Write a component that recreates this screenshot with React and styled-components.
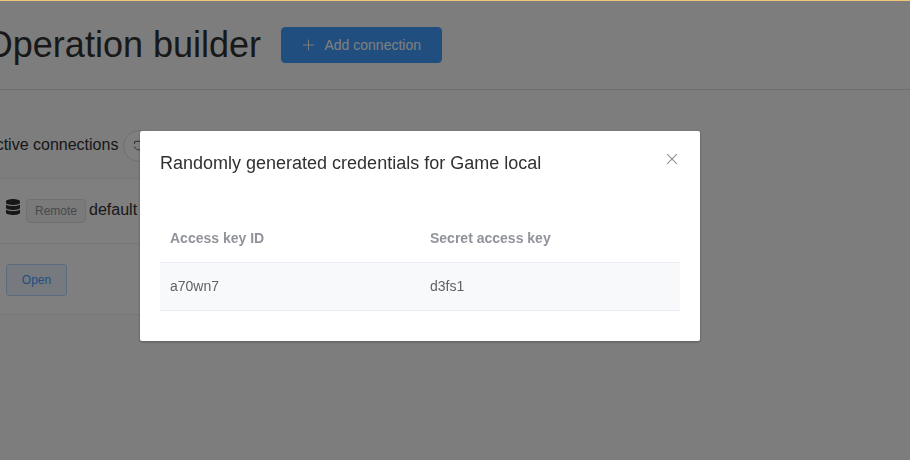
import React from 'react';
import styled, { createGlobalStyle } from 'styled-components';

const GlobalStyle = createGlobalStyle`
  *, *::before, *::after { box-sizing: border-box; }
  body {
    margin: 0;
    overflow: hidden;
    font-family: "Liberation Sans", Arial, sans-serif;
    background: #fafafa;
    color: #303133;
  }
`;

const Page = styled.div`
  height: 460px;
  overflow: hidden;
  background: #fafafa;
`;

const ProgressBar = styled.div`
  position: fixed;
  inset: 0 0 auto 0;
  height: 1px;
  background: #f0c674;
  z-index: 10;
`;

const Header = styled.header`
  display: flex;
  align-items: center;
  gap: 20px;
  height: 90px;
  margin-left: -20px;
  border-bottom: 1px solid #dcdcdc;
`;

const Title = styled.h1`
  margin: 0;
  width: 281px;
  text-align: right;
  white-space: nowrap;
  font-size: 36px;
  line-height: 40px;
  font-weight: 400;
  color: #303133;
`;

const PrimaryButton = styled.button`
  display: flex;
  align-items: center;
  gap: 9.5px;
  width: 161px;
  height: 36px;
  padding: 0 20px;
  border: 1px solid #409eff;
  border-radius: 4px;
  background: #409eff;
  color: #fff;
  font: 14px "Liberation Sans", Arial, sans-serif;
  white-space: nowrap;
`;

const SectionHeading = styled.div`
  display: flex;
  align-items: center;
  gap: 5px;
  height: 32px;
  margin: 40px 0 16px -16px;
  font-size: 16px;
  white-space: nowrap;
`;

const SectionLabel = styled.span`
  width: 134.4px;
  margin-right: -0.4px;
  display: flex;
  justify-content: flex-end;
  line-height: 30px;
  padding-bottom: 2px;
`;

const RoundButton = styled.button`
  display: flex;
  align-items: center;
  justify-content: center;
  width: 32px;
  height: 32px;
  padding: 0;
  border: 1px solid #dcdfe6;
  border-radius: 50%;
  background: #fff;
  color: #606266;
`;

const ConnectionList = styled.section`
  width: 400px;
  background: #fff;
  border-top: 1px solid #ebeef5;
`;

const ConnectionRow = styled.div`
  display: flex;
  align-items: center;
  height: ${(p) => p.$height}px;
  padding: ${(p) => p.$offset || 0}px 0 0 6px;
  border-bottom: 1px solid #ebeef5;
  font-size: 16px;
`;

const Tag = styled.span`
  height: 24px;
  margin: 0 3px 0 6px;
  padding: 0 8px;
  border: 1px solid #e0e1e4;
  border-radius: 4px;
  background: #f4f4f5;
  color: #909399;
  font-size: 12px;
  line-height: 23px;
`;

const Name = styled.span`
  line-height: 18px;
  margin-top: -2px;
`;

const OpenButton = styled.button`
  height: 32px;
  width: 61px;
  padding: 0;
  border: 1px solid #b3d8ff;
  border-radius: 3px;
  background: #ecf5ff;
  color: #409eff;
  font: 12px "Liberation Sans", Arial, sans-serif;
`;

const Overlay = styled.div`
  position: fixed;
  inset: 0;
  padding: 131px 0 0 140px;
  background: rgba(0, 0, 0, 0.5);
`;

const Dialog = styled.div`
  width: 560px;
  height: 210px;
  border-radius: 2px;
  background: #fff;
  box-shadow: 0 1px 3px rgba(0, 0, 0, 0.3);
`;

const DialogHeader = styled.div`
  display: flex;
  justify-content: space-between;
  padding: 20px 20px 10px;
  font-size: 18px;
  line-height: 24px;
  color: #303133;
`;

const CloseButton = styled.button`
  width: 16px;
  height: 16px;
  padding: 0;
  border: 0;
  background: none;
  color: #909399;
  display: block;
`;

const DialogBody = styled.div`
  padding: 30px 20px;
`;

const Table = styled.div`
  font-size: 14px;
  line-height: 23px;
  color: #606266;
`;

const TableRow = styled.div`
  display: grid;
  grid-template-columns: 260px 260px;
  height: 48px;
  align-items: center;
  padding-bottom: 1px;
  border-bottom: 1px solid #ebeef5;
  background: ${(p) => (p.$striped ? '#f8f9fb' : '#fff')};
  color: ${(p) => (p.$head ? '#909399' : '#606266')};
  font-weight: ${(p) => (p.$head ? 700 : 400)};
`;

const Cell = styled.div`
  padding: 0 10px;
`;

const PlusIcon = () => (
  <svg width="14" height="14" viewBox="0 0 14 14" stroke="currentColor" strokeWidth="1">
    <path d="M7 1.2v11.6M1.2 7h11.6" />
  </svg>
);

const CloseIcon = () => (
  <svg width="16" height="16" viewBox="0 0 16 16" stroke="currentColor" strokeWidth="1.15">
    <path d="M3.2 3.2l9.6 9.6M12.8 3.2l-9.6 9.6" />
  </svg>
);

const RefreshIcon = () => (
  <svg width="12" height="12" viewBox="0 0 12 12" fill="none" stroke="currentColor" strokeWidth="1">
    <path d="M4.5 1.5H1.5V4M2 2C4 .6 8 .9 9.9 3.7M10.5 10.5v-3h-3M10.3 7.7C8.8 10.8 3.2 11 1.3 6.5" />
  </svg>
);

const DatabaseGlyph = styled.svg`
  margin-bottom: 8px;
`;

const DatabaseIcon = () => (
  <DatabaseGlyph width="14" height="16" viewBox="0 0 448 512" fill="#303133">
    <path d="M448 73.143v45.714C448 159.143 347.667 192 224 192S0 159.143 0 118.857V73.143C0 32.857 100.333 0 224 0s224 32.857 224 73.143zM448 176v102.857C448 319.143 347.667 352 224 352S0 319.143 0 278.857V176c48.125 33.143 136.208 48.572 224 48.572S399.874 209.143 448 176zm0 160v102.857C448 479.143 347.667 512 224 512S0 479.143 0 438.857V336c48.125 33.143 136.208 48.572 224 48.572S399.874 369.143 448 336z" />
  </DatabaseGlyph>
);

export default function App() {
  return (
    <>
      <GlobalStyle />
      <Page>
        <ProgressBar />
        <Header>
          <Title>Operation builder</Title>
          <PrimaryButton>
            <PlusIcon />
            Add connection
          </PrimaryButton>
        </Header>
        <SectionHeading>
          <SectionLabel>Active connections</SectionLabel>
          <RoundButton aria-label="Refresh">
            <RefreshIcon />
          </RoundButton>
        </SectionHeading>
        <ConnectionList>
          <ConnectionRow $height={65}>
            <DatabaseIcon />
            <Tag>Remote</Tag>
            <Name>default</Name>
          </ConnectionRow>
          <ConnectionRow $height={71} $offset={2}>
            <OpenButton>Open</OpenButton>
          </ConnectionRow>
        </ConnectionList>
      </Page>
      <Overlay>
        <Dialog role="dialog">
          <DialogHeader>
            <span>Randomly generated credentials for Game local</span>
            <CloseButton aria-label="Close">
              <CloseIcon />
            </CloseButton>
          </DialogHeader>
          <DialogBody>
            <Table>
              <TableRow $head>
                <Cell>Access key ID</Cell>
                <Cell>Secret access key</Cell>
              </TableRow>
              <TableRow $striped>
                <Cell>a70wn7</Cell>
                <Cell>d3fs1</Cell>
              </TableRow>
            </Table>
          </DialogBody>
        </Dialog>
      </Overlay>
    </>
  );
}
